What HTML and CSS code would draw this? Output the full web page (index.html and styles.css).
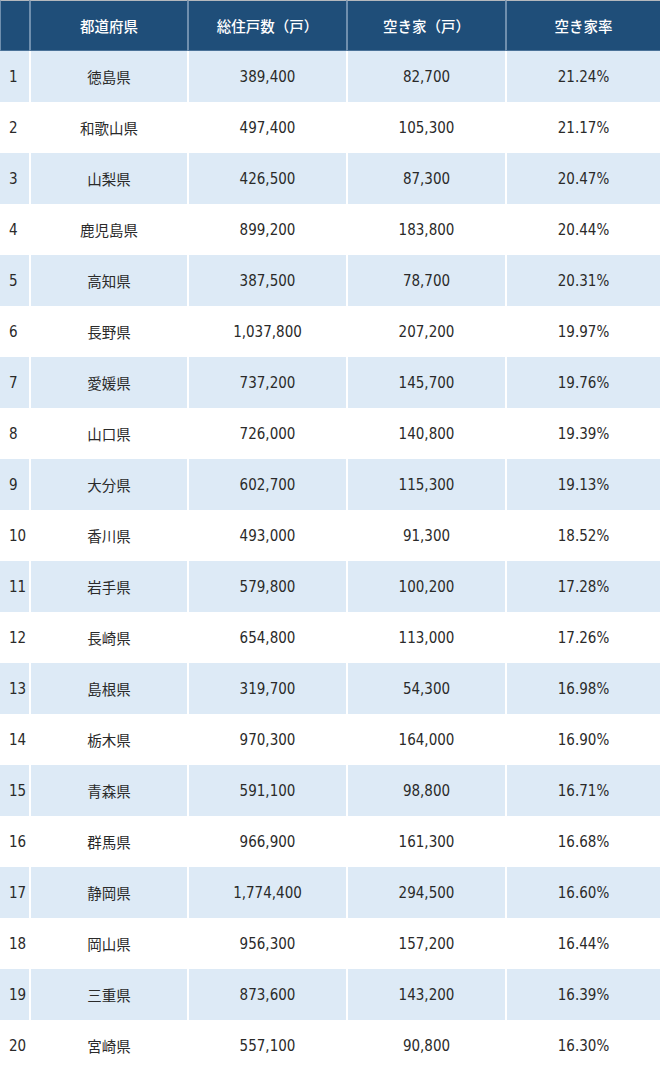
FILE: index.html
```html
<!DOCTYPE html>
<html lang="ja">
<head>
<meta charset="utf-8">
<link rel="stylesheet" href="styles.css">
</head>
<body>
<table class="rank">
  <colgroup>
    <col class="c-no"><col class="c-pref"><col class="c-num"><col class="c-num"><col class="c-rate">
  </colgroup>
  <thead>
    <tr>
      <th></th><th>都道府県</th><th>総住戸数（戸）</th><th>空き家（戸）</th><th>空き家率</th>
    </tr>
  </thead>
  <tbody>
    <tr><td>1</td><td>徳島県</td><td>389,400</td><td>82,700</td><td>21.24%</td></tr>
    <tr><td>2</td><td>和歌山県</td><td>497,400</td><td>105,300</td><td>21.17%</td></tr>
    <tr><td>3</td><td>山梨県</td><td>426,500</td><td>87,300</td><td>20.47%</td></tr>
    <tr><td>4</td><td>鹿児島県</td><td>899,200</td><td>183,800</td><td>20.44%</td></tr>
    <tr><td>5</td><td>高知県</td><td>387,500</td><td>78,700</td><td>20.31%</td></tr>
    <tr><td>6</td><td>長野県</td><td>1,037,800</td><td>207,200</td><td>19.97%</td></tr>
    <tr><td>7</td><td>愛媛県</td><td>737,200</td><td>145,700</td><td>19.76%</td></tr>
    <tr><td>8</td><td>山口県</td><td>726,000</td><td>140,800</td><td>19.39%</td></tr>
    <tr><td>9</td><td>大分県</td><td>602,700</td><td>115,300</td><td>19.13%</td></tr>
    <tr><td>10</td><td>香川県</td><td>493,000</td><td>91,300</td><td>18.52%</td></tr>
    <tr><td>11</td><td>岩手県</td><td>579,800</td><td>100,200</td><td>17.28%</td></tr>
    <tr><td>12</td><td>長崎県</td><td>654,800</td><td>113,000</td><td>17.26%</td></tr>
    <tr><td>13</td><td>島根県</td><td>319,700</td><td>54,300</td><td>16.98%</td></tr>
    <tr><td>14</td><td>栃木県</td><td>970,300</td><td>164,000</td><td>16.90%</td></tr>
    <tr><td>15</td><td>青森県</td><td>591,100</td><td>98,800</td><td>16.71%</td></tr>
    <tr><td>16</td><td>群馬県</td><td>966,900</td><td>161,300</td><td>16.68%</td></tr>
    <tr><td>17</td><td>静岡県</td><td>1,774,400</td><td>294,500</td><td>16.60%</td></tr>
    <tr><td>18</td><td>岡山県</td><td>956,300</td><td>157,200</td><td>16.44%</td></tr>
    <tr><td>19</td><td>三重県</td><td>873,600</td><td>143,200</td><td>16.39%</td></tr>
    <tr><td>20</td><td>宮崎県</td><td>557,100</td><td>90,800</td><td>16.30%</td></tr>
  </tbody>
</table>
</body>
</html>
```

FILE: styles.css
```css
html, body {
  margin: 0;
  padding: 0;
  background: #ffffff;
}

.rank {
  width: 660px;
  table-layout: fixed;
  border-collapse: separate;
  border-spacing: 0;
  font-family: "DejaVu Sans Condensed", "Noto Sans CJK JP", sans-serif;
  font-size: 15px;
  color: #2a2a2a;
}

.c-no { width: 29px; }
.c-pref { width: 158px; }
.c-num { width: 159px; }
.c-rate { width: 155px; }

.rank th {
  height: 51px;
  padding: 0;
  background: #1f4e79;
  color: #ffffff;
  font-family: "Noto Sans CJK JP", sans-serif;
  font-size: 14.5px;
  font-weight: 500;
  text-align: center;
  vertical-align: middle;
  border-top: 1px solid #b4b8bd;
  border-bottom: 1px solid #4a7298;
  box-sizing: border-box;
}

.rank th:first-child {
  border-left: 1px solid #6f8fae;
}

.rank th + th {
  border-left: 2px solid #6f8fae;
}

.rank td {
  height: 51px;
  padding: 0;
  text-align: center;
  vertical-align: middle;
  box-sizing: border-box;
}

.rank td:nth-child(2) {
  font-family: "Noto Sans CJK JP", sans-serif;
  font-size: 14.5px;
}

.rank td:first-child {
  text-align: left;
  padding-left: 9px;
}

.rank td + td {
  border-left: 2px solid #ffffff;
}

.rank tbody tr:nth-child(odd) td {
  background: #ddeaf6;
}

.rank tbody tr:nth-child(even) td {
  background: #ffffff;
}
```
